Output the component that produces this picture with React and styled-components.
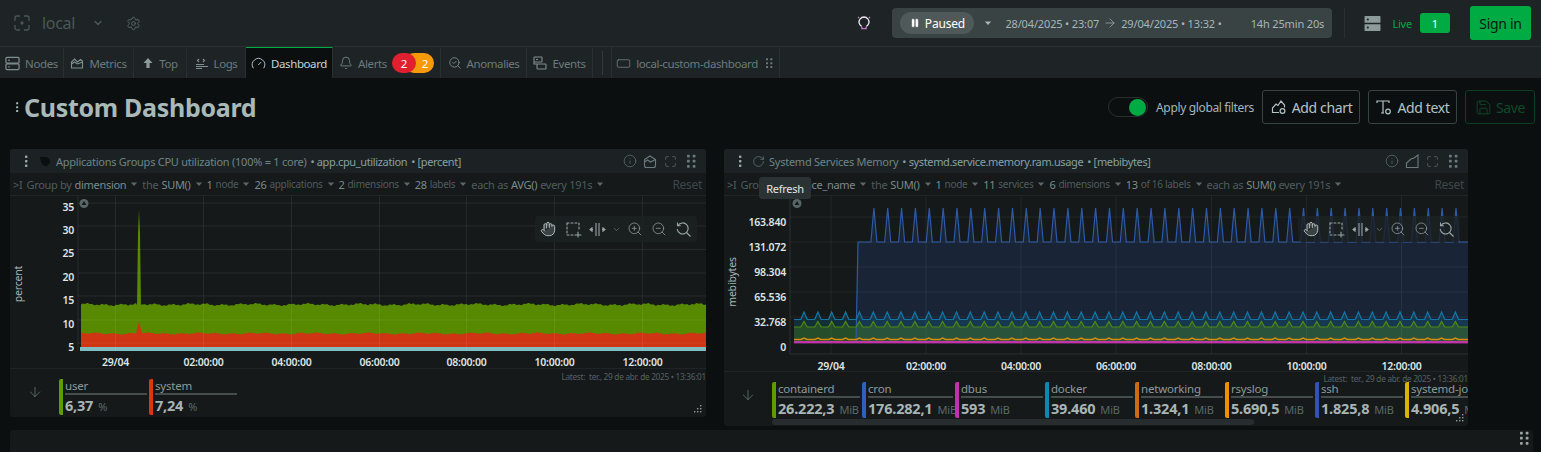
import React from 'react'
import styled, { createGlobalStyle } from 'styled-components'
import {
  Gauge, Bell, Settings, ChevronDown, Info, Maximize, Hand, ZoomIn, ZoomOut,
  RectangleHorizontal, Save, RotateCw, ArrowDown, SearchCheck, ArrowRight, Pause,
} from 'lucide-react'

const GlobalStyle = createGlobalStyle`
  html, body { margin: 0; padding: 0; background: #0b0f10; }
  body { font-family: "Noto Sans", "Open Sans", sans-serif; }
`

const Page = styled.div`
  width: 1541px;
  height: 452px;
  overflow: hidden;
  background: #0b0f10;
  display: flex;
  flex-direction: column;
`

const TopBar = styled.div`
  height: 46px;
  flex: none;
  background: #1e2425;
  border-bottom: 1px solid #2a3031;
  display: flex;
  align-items: center;
  padding: 0 10px 0 14px;
`
const Space = styled.div`
  display: flex;
  align-items: center;
  color: #4b5757;
  font-size: 16px;
  letter-spacing: -0.3px;
  span { margin: 0 17px 0 12px; }
  svg:last-child { margin-left: 22px; color: #5a6666; }
`
const Grow = styled.div`
  flex: 1;
`
const DatePill = styled.div`
  width: 440px;
  height: 30px;
  margin: 0 12px 0 20px;
  box-sizing: border-box;
  padding-left: 8px;
  background: #3a4344;
  border-radius: 4px;
  display: flex;
  align-items: center;
  color: #a3b6ba;
  font-size: 11px;
  letter-spacing: -0.15px;
  white-space: nowrap;
`
const PausedChip = styled.div`
  width: 74px;
  height: 22px;
  background: #4f5959;
  border-radius: 11px;
  color: #fff;
  font-size: 12px;
  letter-spacing: -0.2px;
  display: flex;
  align-items: center;
  justify-content: center;
  gap: 5px;
  margin-right: 10px;
`
const Duration = styled.span`
  margin-left: 29px;
`
const DateChevron = styled.div`
  display: flex;
  margin-right: 13px;
`
const ArrowGap = styled.div`
  display: flex;
  margin: 0 4px 0 4px;
`
const Divider = styled.div`
  width: 1px;
  height: 30px;
  background: #2a3031;
`
const LiveBox = styled.div`
  display: flex;
  align-items: center;
  color: #00ab44;
  font-size: 11px;
  margin: 0 20px 0 19px;
  svg { color: #8d9a9a; }
  span { margin: 0 8px 0 11px; letter-spacing: -0.2px; }
`
const LiveCount = styled.div`
  width: 30px;
  height: 20px;
  background: #00ab44;
  color: #fff;
  border-radius: 3px;
  font-size: 11px;
  display: flex;
  align-items: center;
  justify-content: center;
`
const SignIn = styled.div`
  width: 61px;
  height: 34px;
  background: #00ab44;
  color: #0b1a12;
  border-radius: 3px;
  font-size: 14px;
  letter-spacing: -0.3px;
  display: flex;
  align-items: center;
  justify-content: center;
`

const TabBar = styled.div`
  height: 31px;
  flex: none;
  background: #1e2425;
  display: flex;
`
const Tab = styled.div`
  width: ${p => p.$w}px;
  flex: none;
  box-sizing: border-box;
  display: flex;
  align-items: center;
  justify-content: center;
  gap: 5px;
  font-size: 11.5px;
  letter-spacing: -0.4px;
  white-space: nowrap;
  color: ${p => (p.$active ? '#c3d5da' : '#6a7a7d')};
  background: ${p => (p.$active ? '#0b0f10' : 'transparent')};
  border-top: 1px solid ${p => (p.$active ? '#00ab44' : 'transparent')};
  border-right: 1px solid #2a3031;
  svg { color: ${p => (p.$active ? '#c3d5da' : '#808e8f')}; flex: none; }
`
const TabGap = styled.div`
  width: 18px;
  flex: none;
  display: flex;
  align-items: center;
  justify-content: center;
  border-right: 1px solid #2a3031;
  &::after { content: ''; width: 1px; height: 24px; background: #333a3b; }
`
const AlertBadges = styled.div`
  display: flex;
`
const AlertCount = styled.div`
  width: ${p => p.$w}px;
  height: 20px;
  background: ${p => p.$bg};
  border-radius: 10px;
  color: #fff;
  font-size: 11.5px;
  display: flex;
  align-items: center;
  justify-content: center;
  position: relative;
  z-index: ${p => p.$z};
  margin-left: ${p => p.$ml}px;
  padding-left: ${p => p.$pl}px;
  box-sizing: border-box;
`

const TitleRow = styled.div`
  height: 58px;
  margin-bottom: 13px;
  flex: none;
  display: flex;
  align-items: center;
  padding: 0 6px 0 11px;
`
const PageTitle = styled.h1`
  margin: 0 0 0 1px;
  font-size: 25px;
  line-height: 32px;
  font-weight: 700;
  color: #a9b8b9;
  letter-spacing: -0.3px;
`
const Toggle = styled.div`
  width: 40px;
  height: 20px;
  flex: none;
  box-sizing: border-box;
  border: 1px solid #2a3031;
  border-radius: 10px;
  display: flex;
  justify-content: flex-end;
  align-items: center;
  padding-right: 1px;
  &::after { content: ''; width: 17px; height: 17px; border-radius: 50%; background: #00ab44; }
`
const ToggleText = styled.span`
  margin: 0 8px;
  font-size: 12px;
  letter-spacing: -0.35px;
  color: #a3b6ba;
`
const ActionButton = styled.div`
  height: 34px;
  width: ${p => p.$w}px;
  box-sizing: border-box;
  margin-right: ${p => p.$mr}px;
  border: 1px solid ${p => (p.$off ? '#0d3d22' : '#3a4344')};
  border-radius: 3px;
  color: ${p => (p.$off ? '#0f4a28' : '#b3c3c5')};
  font-size: 14px;
  letter-spacing: -0.35px;
  display: flex;
  align-items: center;
  justify-content: center;
  gap: 4px;
`

const Grid = styled.div`
  display: flex;
  align-items: flex-start;
  gap: 18px;
  padding-left: 10px;
  flex: none;
  height: 281px;
`
const Panel = styled.div`
  position: relative;
  width: ${p => p.$w}px;
  height: ${p => p.$h}px;
  flex: none;
  background: #15191a;
  border-radius: 3px;
  display: flex;
  flex-direction: column;
  overflow: hidden;
`
const PanelHead = styled.div`
  height: 24px;
  flex: none;
  background: #1c2223;
  display: flex;
  align-items: center;
  padding: 0 7px 0 9px;
  font-size: 11px;
  letter-spacing: -0.25px;
  white-space: nowrap;
  color: #6d8488;
`
const HeadMeta = styled.span`
  color: #86a0a5;
  margin-left: 4px;
  letter-spacing: -0.36px;
`
const HeadIcons = styled.div`
  margin-left: auto;
  display: flex;
  align-items: center;
  gap: 6px;
  color: #6a7a7c;
`
const FilterRow = styled.div`
  height: 23px;
  flex: none;
  box-sizing: border-box;
  border-bottom: 1px solid #1f2526;
  display: flex;
  align-items: center;
  padding: 0 4px 0 3px;
  gap: 4px;
  font-size: 11px;
  letter-spacing: -0.3px;
  white-space: nowrap;
  color: #4f5c5e;
`
const FilterItem = styled.div`
  display: flex;
  align-items: center;
  gap: 3px;
  svg { margin-left: 1px; }
`
const Strong = styled.span`
  color: #7c8a8c;
`
const Small = styled.span`
  font-size: 10px;
`
const Reset = styled.span`
  margin-left: auto;
  font-size: 12px;
  color: #3d4749;
`
const Tooltip = styled.div`
  position: absolute;
  left: 35px;
  top: 28px;
  width: 52px;
  height: 22px;
  background: #2b3234;
  border-radius: 3px;
  color: #e2e8e8;
  font-size: 11px;
  letter-spacing: -0.3px;
  display: flex;
  align-items: center;
  justify-content: center;
`
const PlotSvg = styled.svg`
  display: block;
  flex: none;
  overflow: visible;
`
const AxisText = styled.text`
  font-family: "Noto Sans", sans-serif;
  font-size: 10.5px;
  font-weight: 600;
  letter-spacing: -0.2px;
  fill: #dfe4e4;
`
const AxisTitle = styled.text`
  font-family: "Noto Sans", sans-serif;
  font-size: 10.5px;
  letter-spacing: -0.2px;
  fill: #a9b5b5;
`
const Toolbar = styled.div`
  position: absolute;
  top: 67px;
  right: ${p => p.$right}px;
  width: 162px;
  height: 26px;
  background: rgba(28, 33, 34, 0.8);
  border-radius: 4px;
  display: flex;
  align-items: center;
  color: #9aa5a6;
`
const ToolSlot = styled.div`
  width: ${p => p.$w || 24}px;
  flex: none;
  display: flex;
  align-items: center;
  justify-content: center;
`
const Legend = styled.div`
  height: ${p => p.$h}px;
  flex: none;
  box-sizing: border-box;
  border-top: 1px solid #1f2526;
  display: flex;
  padding-top: 10px;
`
const LegendArrow = styled.div`
  width: ${p => p.$w}px;
  flex: none;
  padding-top: 5px;
  display: flex;
  justify-content: center;
  color: #5f7070;
  box-sizing: border-box;
`
const LegendScroll = styled.div`
  flex: 1;
  min-width: 0;
  overflow: hidden;
  display: flex;
  align-items: flex-start;
`
const LegendItem = styled.div`
  width: ${p => p.$w || 90}px;
  flex: none;
  height: 36px;
  box-sizing: border-box;
  border-left: 4px solid ${p => p.$color};
  border-radius: 2px;
  padding: 0 2px;
  display: flex;
  flex-direction: column;
`
const LegendName = styled.div`
  height: 15px;
  line-height: 14px;
  font-size: 11.5px;
  letter-spacing: -0.2px;
  color: #8d9a9a;
  border-bottom: 2px solid #444c4c;
  white-space: nowrap;
`
const LegendValue = styled.div`
  font-size: 14.5px;
  line-height: 20px;
  font-weight: 700;
  white-space: nowrap;
  letter-spacing: -0.2px;
  color: #a9b5b5;
  span {
    font-size: 11px;
    font-weight: 400;
    color: #5b6969;
    margin-left: 5px;
  }
`
const Latest = styled.div`
  position: absolute;
  right: 0;
  top: ${p => p.$top}px;
  font-size: 8.2px;
  letter-spacing: -0.25px;
  line-height: 11px;
  color: #556163;
  white-space: nowrap;
`
const Grip = styled.div`
  position: absolute;
  right: 3px;
  bottom: 3px;
  display: flex;
`
const ScrollThumb = styled.div`
  position: absolute;
  left: 48px;
  bottom: 1px;
  width: 482px;
  height: 6px;
  background: #272d2e;
  border-radius: 3px;
`
const BottomPanel = styled.div`
  margin-left: 10px;
  width: 1523px;
  flex: 1;
  background: #15191a;
  border-radius: 3px 3px 0 0;
  display: flex;
  justify-content: flex-end;
  padding: 0 1px 0 0;
  box-sizing: border-box;
`

const Dots = ({ size = 14, color = '#6a7a7c', cols = 2, rows = 3 }) => {
  const items = []
  for (let c = 0; c < cols; c++) {
    for (let r = 0; r < rows; r++) {
      items.push(<rect key={c + '-' + r} x={cols === 1 ? 6 : 3.5 + c * 5} y={1.5 + r * 4.5} width="2.4" height="2.4" rx=".6" fill={color} />)
    }
  }
  return <svg width={size} height={size} viewBox="0 0 14 14">{items}</svg>
}

const Caret = ({ color = '#5a6668', size = 8 }) => (
  <svg width={size} height={size} viewBox="0 0 8 8"><path d="M0.8 2.4h6.4L4 6z" fill={color} /></svg>
)

const Logo = () => (
  <svg width="16" height="16" viewBox="0 0 16 16" fill="none" stroke="#4b5757" strokeWidth="1.3">
    <path d="M6 1H3a2 2 0 0 0-2 2v3M10 1h3a2 2 0 0 1 2 2v3M15 10v3a2 2 0 0 1-2 2h-3M6 15H3a2 2 0 0 1-2-2v-3" />
    <circle cx="8" cy="8" r="1" fill="#4b5757" />
  </svg>
)
const BulbIcon = () => (
  <svg width="16" height="16" viewBox="0 0 16 16" fill="none" stroke="#ece8f0" strokeWidth="1.3">
    <path d="M5.6 11.4a5 5 0 1 1 4.8 0" />
    <path d="M5.8 11.6v2h4.4v-2" stroke="#c07ac8" />
    <path d="M3 3l-1-1M13 3l1-1" stroke="#c07ac8" />
  </svg>
)
const NodesIcon = () => (
  <svg width="15" height="15" viewBox="0 0 16 16" fill="none" stroke="currentColor" strokeWidth="1.3">
    <rect x="1" y="1.5" width="14" height="6" rx="1.2" />
    <rect x="1" y="8.5" width="14" height="6" rx="1.2" />
    <path d="M3.5 4.5h1.5M3.5 11.5h1.5" strokeWidth="1.4" />
  </svg>
)
const ServerIcon = () => (
  <svg width="17" height="17" viewBox="0 0 16 16" fill="currentColor">
    <rect x="0.5" y="1" width="15" height="6.4" rx=".6" />
    <rect x="0.5" y="8.6" width="15" height="6.4" rx=".6" />
    <circle cx="3.6" cy="4.2" r="1" fill="#1e2425" />
    <circle cx="3.6" cy="11.8" r="1" fill="#1e2425" />
  </svg>
)
const MetricsIcon = () => (
  <svg width="14" height="14" viewBox="0 0 14 14" fill="none" stroke="currentColor" strokeWidth="1.1">
    <path d="M1.5 8V6l3-3 3 3 3-2.5L12.5 5v3M1.5 8l3-2 3 2 5-2M1.5 8v4h11V8" />
  </svg>
)
const TopIcon = () => (
  <svg width="12" height="12" viewBox="0 0 12 12"><path d="M6 1l4.5 5H7.6v5H4.4V6H1.5z" fill="#8d9a9a" /></svg>
)
const LogsIcon = () => (
  <svg width="14" height="14" viewBox="0 0 14 14" fill="none" stroke="currentColor" strokeWidth="1.1">
    <path d="M4 3L2.5 4.5 4 6M8 3l1.5 1.5L8 6M1 8.5h8M1 10.5h12M1 12.5h6" />
  </svg>
)
const EventsIcon = () => (
  <svg width="14" height="14" viewBox="0 0 14 14" fill="none" stroke="currentColor" strokeWidth="1.1">
    <rect x="1" y="1" width="8" height="5" rx=".8" /><rect x="4" y="8" width="9" height="5" rx=".8" />
    <path d="M3 3.5h2M1 6v2h3" />
  </svg>
)
const AddChartIcon = () => (
  <svg width="18" height="18" viewBox="0 0 18 18" fill="none" stroke="#b3c3c5" strokeWidth="1.2">
    <path d="M9 14.5H2.5V10L6 6l2 1.5L11 3l3.5 4v2.5" /><circle cx="12.5" cy="13" r="2.4" />
  </svg>
)
const AddTextIcon = () => (
  <svg width="18" height="18" viewBox="0 0 18 18" fill="none" stroke="#b3c3c5" strokeWidth="1.2">
    <path d="M2 5V3h12v2M8 3v12M6 15h3" /><circle cx="13" cy="13.5" r="2.3" />
  </svg>
)
const AppsIcon = () => (
  <svg width="12" height="12" viewBox="0 0 12 12"><path d="M1 2h7l3 3v3l-3 3H5L2 7z" fill="#0b0f10" /></svg>
)
const MetricChartIcon = ({ flat }) => (
  <svg width="15" height="15" viewBox="0 0 15 15" fill="none" stroke="currentColor" strokeWidth="1.1">
    {flat
      ? <path d="M1.5 13.5V9L6 5l3-1 4-3v12.5z" />
      : <path d="M1.5 5.5L7 2l5.5 3.5v6a2 2 0 0 1-2 2h-7a2 2 0 0 1-2-2zM1.5 8l3-2 3 2 5-2.5" />}
  </svg>
)
const AreaSelect = () => (
  <svg width="17" height="17" viewBox="0 0 17 17" fill="none" stroke="#9aa5a6" strokeWidth="1.1">
    <path d="M2 4V2h2M6 2h2M10 2h2M14 2v2M14 6v2M2 6v2M2 10v2M2 14h2M6 14h2M10 14h1M13 11v5M11 14h5" strokeLinecap="round" />
  </svg>
)
const PanIcon = () => (
  <svg width="17" height="15" viewBox="0 0 17 15" fill="none" stroke="#9aa5a6" strokeWidth="1.1">
    <path d="M7 1v13M10 1v13" />
    <path d="M1 7.5h3M13 7.5h3" />
    <path d="M3.5 5.5L1 7.5l2.5 2M13.5 5.5l2.5 2-2.5 2" fill="#9aa5a6" />
  </svg>
)
const ZoomReset = () => (
  <svg width="17" height="17" viewBox="0 0 17 17" fill="none" stroke="#9aa5a6" strokeWidth="1.1">
    <path d="M3 4.5A5.5 5.5 0 1 1 2.2 8M2.5 1.5v3.2h3.2M11 11l4.5 4.5" />
  </svg>
)
const TopBadge = ({ x }) => (
  <g transform={`translate(${x} 7.5)`}>
    <circle r="4.5" fill="#5a6566" />
    <path d="M0-2.6L2.4 1.4h-4.8z" fill="#15191a" />
  </g>
)
const GripDots = () => (
  <svg width="10" height="10" viewBox="0 0 10 10" fill="#8d9a9a">
    <rect x="7" y="1" width="1.4" height="1.4" /><rect x="7" y="4" width="1.4" height="1.4" /><rect x="7" y="7" width="1.4" height="1.4" />
    <rect x="4" y="4" width="1.4" height="1.4" /><rect x="4" y="7" width="1.4" height="1.4" /><rect x="1" y="7" width="1.4" height="1.4" />
  </svg>
)

// cheap repeatable noise so the areas look captured and not like a flat bar
const noise = (seed, amp) => x => {
  const v = Math.sin(x * 0.37 + seed) + Math.sin(x * 0.113 + seed * 2) * 0.8 + Math.sin(x * 1.31 + seed * 3) * 0.6
  return (v / 2.4) * amp
}

const toPath = pts => pts.map((p, i) => (i ? 'L' : 'M') + p[0].toFixed(1) + ' ' + p[1].toFixed(1)).join(' ')

const cpuArea = (() => {
  const top = noise(1.3, 1.7)
  const mid = noise(4.1, 1.3)
  const greenTop = []
  const redTop = []
  for (let x = 71; x <= 696; x += 1) {
    const d = Math.abs(x - 129)
    let g = 108.5 + top(x)
    let r = 137.5 + mid(x)
    if (d < 3) g = 13 + d * d * 24
    if (d < 3) r = 126 + d * 3.5
    greenTop.push([x, g])
    redTop.push([x, r])
  }
  return { greenTop, redTop }
})()

const closeArea = (pts, base) => toPath(pts) + ` L${pts[pts.length - 1][0]} ${base} L${pts[0][0]} ${base} Z`

const CpuPlot = () => {
  const ticks = [[35, 13], [30, 36], [25, 59.5], [20, 83], [15, 106], [10, 130], [5, 153]]
  const times = [[105.5, '29/04'], [193.5, '02:00:00'], [281.5, '04:00:00'], [369.5, '06:00:00'], [456.5, '08:00:00'], [544.5, '10:00:00'], [632.5, '12:00:00']]
  return (
    <PlotSvg width="696" height="172" viewBox="0 0 696 172">
      <path d="M68 0V155" stroke="#262c2d" />
      <path d={closeArea(cpuArea.greenTop, 152)} fill="#578a00" />
      <path d={closeArea(cpuArea.redTop, 152)} fill="#cf3414" />
      <rect x="70" y="151" width="626" height="4" fill="#7fbcc4" />
      {ticks.map(t => <path key={t[0]} d={`M68 ${t[1] - 6}H696`} stroke="#fff" strokeOpacity=".07" />)}
      {times.map(t => <path key={t[1]} d={`M${t[0]} 0V155`} stroke="#fff" strokeOpacity=".07" />)}
      <TopBadge x={74} />
      {ticks.map(t => <AxisText key={t[0]} x="64" y={t[1] + 1.5} textAnchor="end">{t[0]}</AxisText>)}
      {times.map(t => <AxisText key={t[1]} x={t[0]} y="170" textAnchor="middle">{t[1]}</AxisText>)}
      <AxisTitle x="0" y="0" transform="translate(12 88) rotate(-90)" textAnchor="middle">percent</AxisTitle>
    </PlotSvg>
  )
}

const spikeLine = (startX, endX, period, first, base, peak, halfWidth) => {
  const pts = [[startX, base]]
  for (let c = first; c < endX + period; c += period) {
    if (c - halfWidth < startX) continue
    pts.push([c - halfWidth, base], [c, peak], [c + halfWidth, base])
  }
  pts.push([endX, base])
  return pts.filter(p => p[0] <= endX)
}

const MemoryPlot = () => {
  const ticks = [['163.840', 24], ['131.072', 49], ['98.304', 74], ['65.536', 99], ['32.768', 124], ['0', 149]]
  const times = [[107, '29/04'], [202, '02:00:00'], [297, '04:00:00'], [392, '06:00:00'], [487.5, '08:00:00'], [582.5, '10:00:00'], [677.5, '12:00:00']]
  const base = 147
  const blue = [[132, base], [134, 46], ...spikeLine(134, 744, 13.86, 136, 46, 12, 3)]
  const cyan = spikeLine(70, 744, 13.86, 80, 123.5, 116, 3.2)
  const green = spikeLine(70, 744, 13.86, 80, 131, 125.5, 3.2)
  const orange = spikeLine(70, 744, 13.86, 80, 143.5, 142, 3)
  return (
    <PlotSvg width="744" height="175" viewBox="0 0 744 175">
      <path d={closeArea(blue, base)} fill="#2f5fbf" fillOpacity=".18" />
      <path d={closeArea(cyan, base)} fill="#0f86b8" fillOpacity=".2" />
      <path d={closeArea(green, base)} fill="#5e9e00" fillOpacity=".27" />
      <path d={toPath(blue)} fill="none" stroke="#2c5aa8" strokeWidth="1.2" />
      <path d={toPath(cyan)} fill="none" stroke="#0f78a8" strokeWidth="1.2" />
      <path d={toPath(green)} fill="none" stroke="#4c8a10" strokeWidth="1.2" />
      <path d={toPath(orange)} fill="none" stroke="#d68a10" strokeWidth="1.4" />
      <rect x="70" y="145" width="674" height="2.4" fill="#c030a8" />
      <path d="M66 0V158H744" fill="none" stroke="#2a3031" />
      {ticks.map(t => <path key={t[0]} d={`M66 ${t[1] - 3}H744`} stroke="#fff" strokeOpacity=".06" />)}
      {times.map(t => <path key={t[1]} d={`M${t[0]} 0V158`} stroke="#fff" strokeOpacity=".06" />)}
      <TopBadge x={73} />
      {ticks.map(t => <AxisText key={t[0]} x="62" y={t[1] + 6} textAnchor="end">{t[0]}</AxisText>)}
      {times.map(t => <AxisText key={t[1]} x={t[0]} y="174" textAnchor="middle">{t[1]}</AxisText>)}
      <AxisTitle x="0" y="0" transform="translate(12 86) rotate(-90)" textAnchor="middle">mebibytes</AxisTitle>
    </PlotSvg>
  )
}

const tabs = [
  { name: 'Nodes', w: 64, icon: <NodesIcon /> },
  { name: 'Metrics', w: 70, icon: <MetricsIcon /> },
  { name: 'Top', w: 53, icon: <TopIcon /> },
  { name: 'Logs', w: 59, icon: <LogsIcon /> },
  { name: 'Dashboard', w: 87, active: true, icon: <Gauge size={15} strokeWidth={1.4} /> },
]
const afterAlerts = [
  { name: 'Anomalies', w: 86, icon: <SearchCheck size={14} strokeWidth={1.5} /> },
  { name: 'Events', w: 66, icon: <EventsIcon /> },
]

const cpuFilters = [
  { dim: 'Group by', strong: 'dimension' },
  { dim: 'the', strong: 'SUM()' },
  { strong: '1', small: 'node' },
  { strong: '26', small: 'applications' },
  { strong: '2', small: 'dimensions' },
  { strong: '28', small: 'labels' },
  { dim: 'each as', strong: 'AVG()', tail: 'every 191s' },
]
const memFilters = [
  { dim: 'Group by', strong: 'service_name' },
  { dim: 'the', strong: 'SUM()' },
  { strong: '1', small: 'node' },
  { strong: '11', small: 'services' },
  { strong: '6', small: 'dimensions' },
  { strong: '13', small: 'of 16 labels' },
  { dim: 'each as', strong: 'SUM()', tail: 'every 191s' },
]

const cpuLegend = [
  { name: 'user', value: '6,37', unit: '%', color: '#5f9c00' },
  { name: 'system', value: '7,24', unit: '%', color: '#d9370f' },
]
const memLegend = [
  { name: 'containerd', value: '26.222,3', unit: 'MiB', color: '#5f9c00' },
  { name: 'cron', value: '176.282,1', unit: 'MiB', color: '#2f5fbf', w: 93 },
  { name: 'dbus', value: '593', unit: 'MiB', color: '#c030b0' },
  { name: 'docker', value: '39.460', unit: 'MiB', color: '#0f86b8' },
  { name: 'networking', value: '1.324,1', unit: 'MiB', color: '#d06a10' },
  { name: 'rsyslog', value: '5.690,5', unit: 'MiB', color: '#f09000' },
  { name: 'ssh', value: '1.825,8', unit: 'MiB', color: '#3450b8' },
  { name: 'systemd-journal', value: '4.906,5', unit: 'MiB', color: '#e0b000' },
]

const Filters = ({ items }) => (
  <FilterRow>
    <span>&gt;I</span>
    {items.map(f => (
      <FilterItem key={f.strong + (f.small || f.dim)}>
        {f.dim && <span>{f.dim}</span>}
        <Strong>{f.strong}</Strong>
        {f.small && <Small>{f.small}</Small>}
        {f.tail && <span>{f.tail}</span>}
        <Caret />
      </FilterItem>
    ))}
    <Reset>Reset</Reset>
  </FilterRow>
)

const ChartTools = ({ right }) => (
  <Toolbar $right={right}>
    <ToolSlot $w={26}><Hand size={16} strokeWidth={1.5} color="#b3bcbd" fill="#3a4344" /></ToolSlot>
    <ToolSlot><AreaSelect /></ToolSlot>
    <ToolSlot><PanIcon /></ToolSlot>
    <ToolSlot $w={14}><ChevronDown size={9} color="#6a7a7d" /></ToolSlot>
    <ToolSlot><ZoomIn size={16} strokeWidth={1.1} /></ToolSlot>
    <ToolSlot><ZoomOut size={16} strokeWidth={1.1} /></ToolSlot>
    <ToolSlot><ZoomReset /></ToolSlot>
  </Toolbar>
)

const LegendRow = ({ items, h, arrow }) => (
  <Legend $h={h}>
    <LegendArrow $w={arrow}><ArrowDown size={16} strokeWidth={1.3} /></LegendArrow>
    <LegendScroll>
      {items.map(d => (
        <LegendItem key={d.name} $color={d.color} $w={d.w}>
          <LegendName>{d.name}</LegendName>
          <LegendValue>{d.value}<span>{d.unit}</span></LegendValue>
        </LegendItem>
      ))}
    </LegendScroll>
  </Legend>
)

const HeadActions = ({ flat }) => (
  <HeadIcons>
    <Info size={14} strokeWidth={1.1} />
    <MetricChartIcon flat={flat} />
    <Maximize size={13} strokeWidth={1.2} />
    <Dots size={16} />
  </HeadIcons>
)

export default function App() {
  return (
    <Page>
      <GlobalStyle />
      <TopBar>
        <Space>
          <Logo />
          <span>local</span>
          <ChevronDown size={12} strokeWidth={3} />
          <Settings size={15} strokeWidth={1.6} />
        </Space>
        <Grow />
        <BulbIcon />
        <DatePill>
          <PausedChip><Pause size={10} fill="#fff" strokeWidth={1} />Paused</PausedChip>
          <DateChevron><Caret color="#a3b6ba" /></DateChevron>
          28/04/2025 • 23:07
          <ArrowGap><ArrowRight size={14} strokeWidth={1.2} /></ArrowGap>
          29/04/2025 • 13:32 •
          <Duration>14h 25min 20s</Duration>
        </DatePill>
        <Divider />
        <LiveBox>
          <ServerIcon />
          <span>Live</span>
          <LiveCount>1</LiveCount>
        </LiveBox>
        <SignIn>Sign in</SignIn>
      </TopBar>
      <TabBar>
        {tabs.map(t => <Tab key={t.name} $w={t.w} $active={t.active}>{t.icon}{t.name}</Tab>)}
        <Tab $w={108}>
          <Bell size={14} strokeWidth={1.4} />Alerts
          <AlertBadges>
            <AlertCount $w={24} $bg="#e0202f" $z={2} $ml={0} $pl={0}>2</AlertCount>
            <AlertCount $w={30} $bg="#f79a06" $z={1} $ml={-12} $pl={12}>2</AlertCount>
          </AlertBadges>
        </Tab>
        {afterAlerts.map(t => <Tab key={t.name} $w={t.w}>{t.icon}{t.name}</Tab>)}
        <TabGap />
        <Tab $w={168}>
          <RectangleHorizontal size={15} strokeWidth={1.1} />local-custom-dashboard<Dots size={12} />
        </Tab>
      </TabBar>
      <TitleRow>
        <Dots size={12} cols={1} color="#a9b8b9" />
        <PageTitle>Custom Dashboard</PageTitle>
        <Grow />
        <Toggle />
        <ToggleText>Apply global filters</ToggleText>
        <ActionButton $w={98} $mr={8}><AddChartIcon />Add chart</ActionButton>
        <ActionButton $w={89} $mr={8}><AddTextIcon />Add text</ActionButton>
        <ActionButton $w={70} $mr={0} $off><Save size={17} strokeWidth={1.3} />Save</ActionButton>
      </TitleRow>
      <Grid>
        <Panel $w={696} $h={268}>
          <PanelHead>
            <Dots size={14} cols={1} color="#9aa5a6" />
            <ToolSlot $w={23}><AppsIcon /></ToolSlot>
            <span>Applications Groups CPU utilization (100% = 1 core)</span>
            <HeadMeta>• app.cpu_utilization</HeadMeta>
            <HeadMeta>• [percent]</HeadMeta>
            <HeadActions />
          </PanelHead>
          <Filters items={cpuFilters} />
          <CpuPlot />
          <ChartTools right={9} />
          <LegendRow items={cpuLegend} h={48} arrow={49} />
          <Latest $top={222}>Latest:&nbsp; ter., 29 de abr. de 2025 • 13:36:01</Latest>
          <Grip><GripDots /></Grip>
        </Panel>
        <Panel $w={744} $h={277}>
          <PanelHead>
            <Dots size={14} cols={1} color="#9aa5a6" />
            <ToolSlot $w={22}><RotateCw size={13} strokeWidth={1.2} color="#6d8488" /></ToolSlot>
            <span>Systemd Services Memory</span>
            <HeadMeta>• systemd.service.memory.ram.usage</HeadMeta>
            <HeadMeta>• [mebibytes]</HeadMeta>
            <HeadActions flat />
          </PanelHead>
          <Filters items={memFilters} />
          <MemoryPlot />
          <ChartTools right={8} />
          <LegendRow items={memLegend} h={54} arrow={48} />
          <ScrollThumb />
          <Tooltip>Refresh</Tooltip>
          <Latest $top={224}>Latest:&nbsp; ter., 29 de abr. de 2025 • 13:36:01</Latest>
          <Grip><GripDots /></Grip>
        </Panel>
      </Grid>
      <BottomPanel>
        <Dots size={16} color="#9aa5a6" />
      </BottomPanel>
    </Page>
  )
}
